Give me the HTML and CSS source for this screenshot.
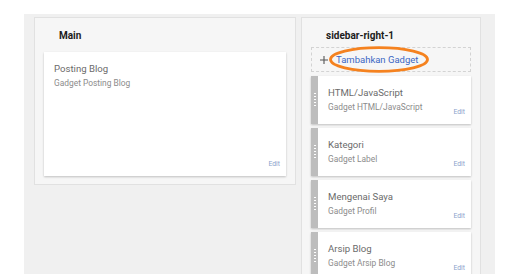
FILE: index.html
```html
<!DOCTYPE html>
<html lang="id">
<head>
	<meta charset="UTF-8">
	<title>Tata Letak</title>
	<link rel="stylesheet" href="styles.css">
</head>
<body>
	<div class="layout">
		<section class="panel panel-main">
			<h3 class="panel-title">Main</h3>
			<div class="gadget gadget-main">
				<div class="gadget-text">
					<p class="gadget-name">Posting Blog</p>
					<p class="gadget-type">Gadget Posting Blog</p>
				</div>
				<a class="gadget-edit">Edit</a>
			</div>
		</section>
		<section class="panel panel-side">
			<h3 class="panel-title">sidebar-right-1</h3>
			<div class="add-gadget">
				<svg class="plus" width="8" height="8" viewBox="0 0 8 8"><path d="M4 0V8M0 4H8" stroke="#555" stroke-width="1.1" fill="none"/></svg>
				<a class="add-link">Tambahkan Gadget</a>
				<svg class="mark" width="100" height="27" viewBox="0 0 100 27"><ellipse cx="50" cy="13.5" rx="48.5" ry="11.8" fill="none" stroke="#f5821f" stroke-width="2.8"/></svg>
			</div>
			<div class="gadget gadget-side">
				<span class="handle"></span>
				<div class="gadget-text">
					<p class="gadget-name">HTML/JavaScript</p>
					<p class="gadget-type">Gadget HTML/JavaScript</p>
				</div>
				<a class="gadget-edit">Edit</a>
			</div>
			<div class="gadget gadget-side">
				<span class="handle"></span>
				<div class="gadget-text">
					<p class="gadget-name">Kategori</p>
					<p class="gadget-type">Gadget Label</p>
				</div>
				<a class="gadget-edit">Edit</a>
			</div>
			<div class="gadget gadget-side">
				<span class="handle"></span>
				<div class="gadget-text">
					<p class="gadget-name">Mengenai Saya</p>
					<p class="gadget-type">Gadget Profil</p>
				</div>
				<a class="gadget-edit">Edit</a>
			</div>
			<div class="gadget gadget-side">
				<span class="handle"></span>
				<div class="gadget-text">
					<p class="gadget-name">Arsip Blog</p>
					<p class="gadget-type">Gadget Arsip Blog</p>
				</div>
				<a class="gadget-edit">Edit</a>
			</div>
		</section>
	</div>
</body>
</html>
```
FILE: styles.css
```css
*{padding:0;margin:0;box-sizing:border-box;}
body{background:#fff;font-family:Roboto,"Liberation Sans",Arial,sans-serif;}
.layout{display:flex;align-items:flex-start;gap:5px;width:471px;height:260px;margin:14px 0 0 24px;padding:3px 14px 0 10px;background:#f0f0f0;overflow:hidden;}
.panel{background:#f6f6f6;border:1px solid #e1e1e1;padding:11px 9px 8px;}
.panel-main{width:262px;}
.panel-side{width:180px;height:290px;}
.panel-title{font-size:10px;font-weight:700;line-height:14px;padding-left:15px;color:#1c1c1c;}
.add-gadget{position:relative;display:flex;align-items:center;gap:8px;height:25px;margin:4px 0 1px;padding-left:8px;border:1px dashed #d3d3d3;}
.add-link{font-size:9.5px;color:#3d68c4;}
.mark{position:absolute;left:17px;top:-2.5px;}
.gadget{display:flex;background:#fff;box-shadow:0 1px 2px rgba(0,0,0,.22);}
.gadget-main{height:124px;margin-top:9px;}
.gadget-side{height:48px;margin-top:4px;}
.handle{display:flex;align-items:center;justify-content:center;width:7px;background:#bdbdbd;}
.handle::before{content:"";width:2px;height:14px;background:repeating-linear-gradient(#fff 0 1px,transparent 1px 3px);}
.gadget-text{flex:1;padding:11px 0 0 10px;}
.gadget-name{font-size:9.6px;line-height:12px;color:#6b6b6b;}
.gadget-type{font-size:8.4px;line-height:12px;margin-top:2px;color:#8c8c8c;}
.gadget-edit{align-self:flex-end;font-size:6.8px;line-height:10px;margin:0 6px 7px 0;color:#8aa2cc;}
```
